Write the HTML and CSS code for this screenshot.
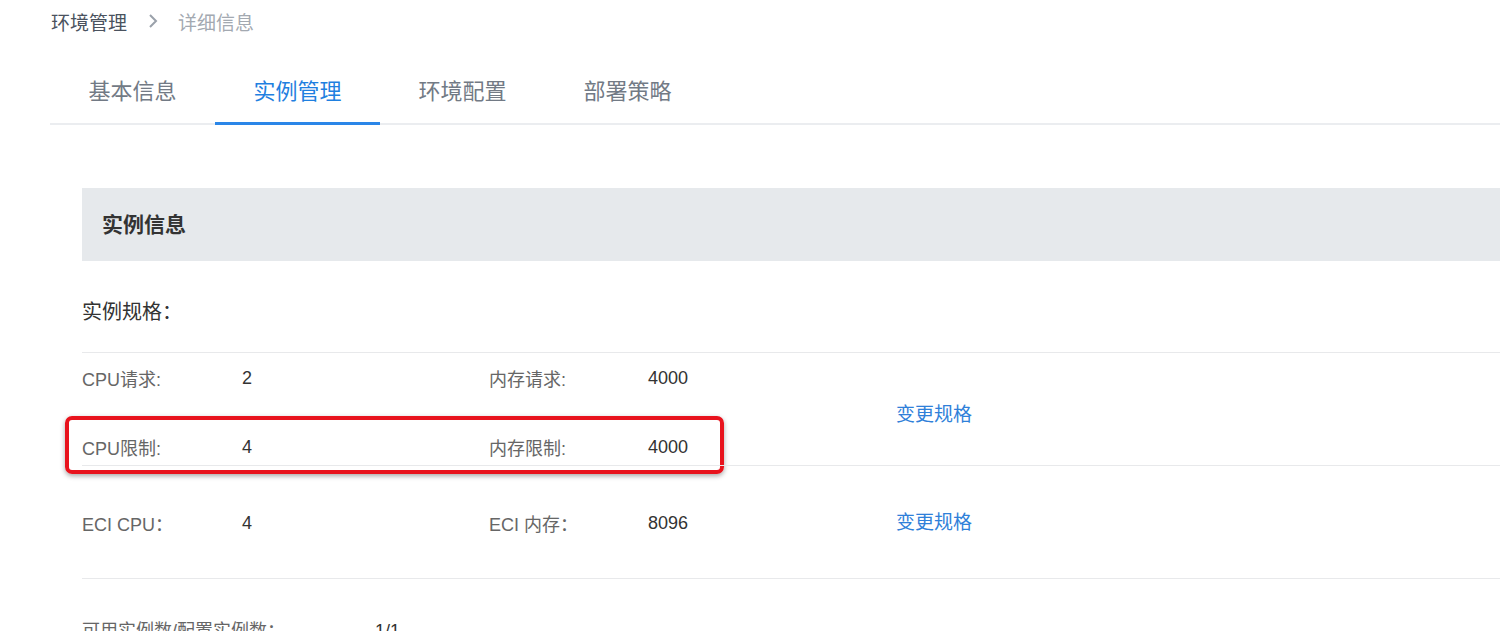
FILE: index.html
```html
<!DOCTYPE html>
<html lang="zh-CN">
<head>
  <meta charset="UTF-8">
  <meta name="viewport" content="width=device-width, initial-scale=1.0">
  <title>环境管理 - 详细信息</title>
  <link rel="stylesheet" href="styles.css">
</head>
<body>
  <div class="page">
    <div class="breadcrumb">
      <span class="crumb">环境管理</span>
      <svg class="crumb-sep" width="12" height="16" viewBox="0 0 12 16">
        <path d="M3 2l6 6-6 6" fill="none" stroke="#9aa1aa" stroke-width="2"/>
      </svg>
      <span class="crumb current">详细信息</span>
    </div>

    <div class="tabs">
      <div class="tab">基本信息</div>
      <div class="tab active">实例管理</div>
      <div class="tab">环境配置</div>
      <div class="tab">部署策略</div>
    </div>

    <div class="panel">
      <div class="panel-header">实例信息</div>

      <div class="spec-title">实例规格：</div>

      <div class="spec-group first">
        <div class="spec-grid">
          <span class="label">CPU请求:</span>
          <span class="value">2</span>
          <span class="label">内存请求:</span>
          <span class="value">4000</span>
          <a class="link span-rows" href="#">变更规格</a>

          <span class="label row2">CPU限制:</span>
          <span class="value row2">4</span>
          <span class="label row2">内存限制:</span>
          <span class="value row2">4000</span>
        </div>
        <div class="highlight"></div>
      </div>

      <div class="spec-group second">
        <div class="spec-grid">
          <span class="label">ECI CPU：</span>
          <span class="value">4</span>
          <span class="label">ECI 内存：</span>
          <span class="value">8096</span>
          <a class="link raised" href="#">变更规格</a>
        </div>
      </div>

      <div class="count-row">
        <span class="label count-label">可用实例数/配置实例数：</span>
        <span class="value">1/1</span>
      </div>
    </div>
  </div>
</body>
</html>
```

FILE: styles.css
```css
body {
  margin: 0;
  font-family: "Liberation Sans", "Noto Sans CJK SC", sans-serif;
  background-color: #fff;
  color: #333;
  overflow: hidden;
}
.page {
  padding-left: 50px;
}
.breadcrumb {
  height: 42px;
  display: flex;
  align-items: center;
  padding-left: 1px;
  font-size: 19px;
}
.crumb {
  color: #4a525e;
}
.crumb.current {
  color: #a3a9b1;
}
.crumb-sep {
  margin: 0 19px 0 20px;
}
.tabs {
  display: flex;
  margin-top: 18px;
  border-bottom: 2px solid #ebedf0;
}
.tab {
  width: 165px;
  height: 60px;
  padding-top: 2px;
  line-height: 60px;
  text-align: center;
  font-size: 22px;
  color: #727a85;
  border-bottom: 3px solid transparent;
  margin-bottom: -2px;
}
.tab.active {
  color: #1f80e0;
  border-bottom-color: #2a86e8;
}
.panel {
  margin: 63px 0 0 32px;
}
.panel-header {
  height: 73px;
  line-height: 73px;
  padding-left: 20px;
  background-color: #e6e9ec;
  font-size: 21px;
  font-weight: bold;
  color: #333;
}
.spec-title {
  margin-top: 36px;
  margin-bottom: 25px;
  height: 30px;
  line-height: 30px;
  font-size: 20px;
  color: #333;
}
.spec-group {
  position: relative;
  border-top: 1px solid #e8e9eb;
}
.spec-group.first {
  padding-top: 7px;
}
.spec-group.second {
  padding: 39px 0 37px;
  border-bottom: 1px solid #e8e9eb;
}
.spec-grid {
  display: grid;
  grid-template-columns: 160px 247px 159px 248px auto;
  grid-auto-rows: 36px;
  row-gap: 33px;
  align-items: center;
  font-size: 18px;
}
.label {
  color: #666;
}
.value {
  color: #333;
}
.row2 {
  grid-row: 2;
}
.link {
  color: #2f80d9;
  font-size: 19px;
  text-decoration: none;
  justify-self: start;
}
.span-rows {
  grid-column: 5;
  grid-row: 1 / span 2;
}
.raised {
  margin-bottom: 6px;
}
.highlight {
  position: absolute;
  left: -17px;
  top: 63px;
  width: 659px;
  height: 58px;
  box-sizing: border-box;
  border: 4px solid #e8131d;
  border-radius: 7px;
  box-shadow: 0 2px 5px rgba(0, 0, 0, 0.35);
}
.count-row {
  display: flex;
  margin-top: 34px;
  height: 36px;
  line-height: 36px;
  font-size: 18px;
}
.count-label {
  width: 293px;
}
```
